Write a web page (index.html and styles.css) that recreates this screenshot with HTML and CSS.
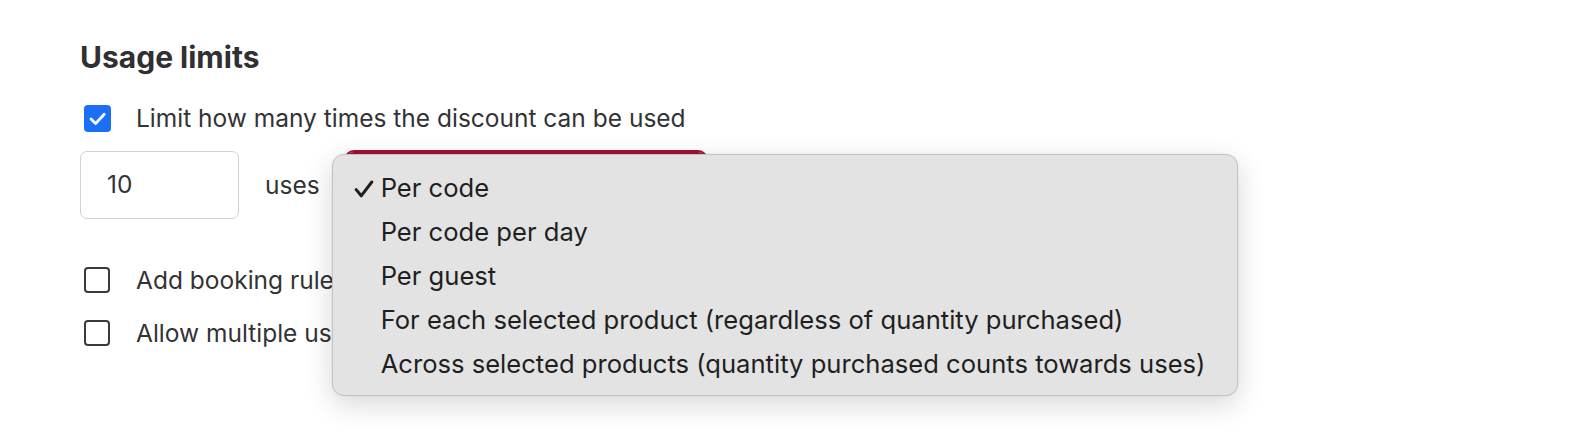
FILE: index.html
```html
<!DOCTYPE html>
<html lang="en">
<head>
<meta charset="utf-8">
<title>Usage limits</title>
<link rel="stylesheet" href="styles.css">
</head>
<body>
<section class="panel">
  <h2 class="title">Usage limits</h2>
  <label class="check-row first">
    <span class="box checked">
      <svg viewBox="0 0 27 27" width="27" height="27"><path d="M7 14l4.6 4.6 8.6-9.4" fill="none" stroke="#fff" stroke-width="2.8" stroke-linecap="round" stroke-linejoin="round"/></svg>
    </span>
    <span class="label">Limit how many times the discount can be used</span>
  </label>
  <div class="uses-row">
    <div class="num-input">10</div>
    <span class="uses">uses</span>
    <div class="select">
      <div class="menu">
        <div class="item"><svg class="tick" viewBox="0 0 20 18" width="20" height="18"><path d="M2.2 9.6l5 6.2L17.8 2" fill="none" stroke="#1f1f1f" stroke-width="3" stroke-linecap="round" stroke-linejoin="round"/></svg>Per code</div>
        <div class="item">Per code per day</div>
        <div class="item">Per guest</div>
        <div class="item">For each selected product (regardless of quantity purchased)</div>
        <div class="item">Across selected products (quantity purchased counts towards uses)</div>
      </div>
    </div>
  </div>
  <label class="check-row second">
    <span class="box"></span>
    <span class="label clipped">Add booking rules</span>
  </label>
  <label class="check-row third">
    <span class="box"></span>
    <span class="label clipped">Allow multiple uses per order</span>
  </label>
</section>
</body>
</html>
```
FILE: styles.css
```css
* { box-sizing: border-box; }
html, body { margin: 0; background: #fff; }
body {
  min-height: 432px;
  font-family: Inter, "Noto Sans", sans-serif;
  color: #333336;
}
.panel {
  padding: 37px 0 0 80px;
  display: flex;
  flex-direction: column;
  align-items: flex-start;
}
.title {
  margin: 0;
  font-size: 30px;
  line-height: 40px;
  font-weight: 700;
  color: #303033;
}
.check-row {
  display: flex;
  align-items: center;
  height: 32px;
  padding-left: 4px;
}
.check-row.first { margin-top: 25px; }
.check-row.second { margin-top: 45px; }
.check-row.third { margin-top: 21px; }
.box {
  width: 26px;
  height: 26px;
  border: 2.5px solid #3b3b3e;
  border-radius: 4px;
  display: flex;
  align-items: center;
  justify-content: center;
  flex: none;
}
.box.checked {
  width: 27px;
  height: 27px;
  border: none;
  background: #1a6ff4;
}
.label {
  margin-left: 26px;
  font-size: 24.5px;
  line-height: 32px;
  color: #333336;
  white-space: nowrap;
}
.check-row.first .label { margin-left: 25px; }
.label.clipped {
  max-width: 196px;
  overflow: hidden;
}
.uses-row {
  display: flex;
  align-items: center;
  margin-top: 17px;
}
.num-input {
  width: 159px;
  height: 68px;
  border: 1.5px solid #d2d2d4;
  border-radius: 7px;
  padding-left: 26px;
  font-size: 24.5px;
  line-height: 65px;
}
.uses {
  margin-left: 26px;
  font-size: 24.5px;
}
.select {
  position: relative;
  margin-left: 26px;
  width: 360px;
  height: 66px;
  border: 2px solid #a50f3a;
  box-shadow: 0 0 0 2px #a50f3a;
  border-radius: 8px;
}
.menu {
  position: absolute;
  left: -16px;
  top: 0;
  width: 906px;
  padding: 11px 0 9px;
  background: #e3e3e3;
  border: 1px solid #c3c3c3;
  border-radius: 12px;
  box-shadow: 0 8px 28px rgba(0, 0, 0, 0.16), 0 0 2px rgba(0,0,0,0.08);
  font-size: 25.6px;
  line-height: 44px;
  color: #1f1f1f;
}
.item {
  position: relative;
  padding-left: 48px;
  height: 44px;
  white-space: nowrap;
}
.tick {
  position: absolute;
  left: 21px;
  top: 14px;
}
```
